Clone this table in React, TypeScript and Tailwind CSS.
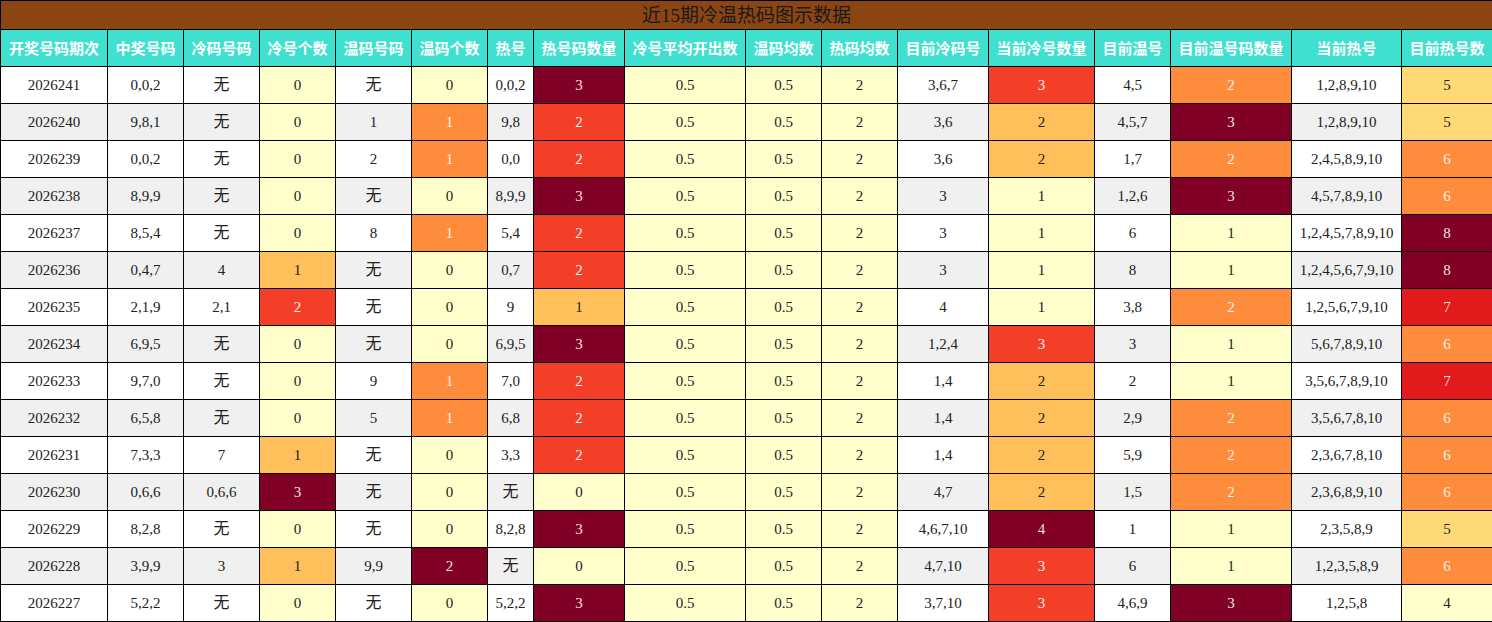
import React from "react";

// 近15期冷温热码 table
type Row = (string | number)[];

const headers = [
  "开奖号码期次", "中奖号码", "冷码号码", "冷号个数", "温码号码", "温码个数", "热号", "热号码数量",
  "冷号平均开出数", "温码均数", "热码均数", "目前冷码号", "当前冷号数量", "目前温号", "目前温号码数量", "当前热号", "目前热号数",
];

const colWidths = [
  "w-[107px]", "w-[76px]", "w-[76px]", "w-[76px]", "w-[76px]", "w-[76px]", "w-[46px]", "w-[91px]",
  "w-[121px]", "w-[76px]", "w-[76px]", "w-[91px]", "w-[106px]", "w-[76px]", "w-[121px]", "w-[110px]", "w-[91px]",
];

const rows: Row[] = [
  ["2026241", "0,0,2", "无", 0, "无", 0, "0,0,2", 3, "3,6,7", 3, "4,5", 2, "1,2,8,9,10", 5],
  ["2026240", "9,8,1", "无", 0, "1", 1, "9,8", 2, "3,6", 2, "4,5,7", 3, "1,2,8,9,10", 5],
  ["2026239", "0,0,2", "无", 0, "2", 1, "0,0", 2, "3,6", 2, "1,7", 2, "2,4,5,8,9,10", 6],
  ["2026238", "8,9,9", "无", 0, "无", 0, "8,9,9", 3, "3", 1, "1,2,6", 3, "4,5,7,8,9,10", 6],
  ["2026237", "8,5,4", "无", 0, "8", 1, "5,4", 2, "3", 1, "6", 1, "1,2,4,5,7,8,9,10", 8],
  ["2026236", "0,4,7", "4", 1, "无", 0, "0,7", 2, "3", 1, "8", 1, "1,2,4,5,6,7,9,10", 8],
  ["2026235", "2,1,9", "2,1", 2, "无", 0, "9", 1, "4", 1, "3,8", 2, "1,2,5,6,7,9,10", 7],
  ["2026234", "6,9,5", "无", 0, "无", 0, "6,9,5", 3, "1,2,4", 3, "3", 1, "5,6,7,8,9,10", 6],
  ["2026233", "9,7,0", "无", 0, "9", 1, "7,0", 2, "1,4", 2, "2", 1, "3,5,6,7,8,9,10", 7],
  ["2026232", "6,5,8", "无", 0, "5", 1, "6,8", 2, "1,4", 2, "2,9", 2, "3,5,6,7,8,10", 6],
  ["2026231", "7,3,3", "7", 1, "无", 0, "3,3", 2, "1,4", 2, "5,9", 2, "2,3,6,7,8,10", 6],
  ["2026230", "0,6,6", "0,6,6", 3, "无", 0, "无", 0, "4,7", 2, "1,5", 2, "2,3,6,8,9,10", 6],
  ["2026229", "8,2,8", "无", 0, "无", 0, "8,2,8", 3, "4,6,7,10", 4, "1", 1, "2,3,5,8,9", 5],
  ["2026228", "3,9,9", "3", 1, "9,9", 2, "无", 0, "4,7,10", 3, "6", 1, "1,2,3,5,8,9", 6],
  ["2026227", "5,2,2", "无", 0, "无", 0, "5,2,2", 3, "3,7,10", 3, "4,6,9", 3, "1,2,5,8", 4],
];

const light = "bg-[#ffffcc] text-[#222]";
const amber = "bg-[#ffbf5b] text-[#222]";
const orange = "bg-[#fd8d3c] text-[#f8f0e8]";
const red = "bg-[#f33f28] text-[#f4f4f4]";
const crimson = "bg-[#e31a1c] text-[#f4dede]";
const wine = "bg-[#800026] text-[#f0e0e4]";

const coldScale: Record<number, string> = { 0: light, 1: amber, 2: red, 3: wine, 4: wine };
const warmScale: Record<number, string> = { 0: light, 1: orange, 2: wine, 3: wine };
const curColdScale: Record<number, string> = { 1: light, 2: amber, 3: red, 4: wine };
const curWarmScale: Record<number, string> = { 1: light, 2: orange, 3: wine };
const hotScale: Record<number, string> = { 4: light, 5: "bg-[#fed976] text-[#222]", 6: orange, 7: crimson, 8: wine };

function Cell({ v, cls }: { v: string | number; cls: string }) {
  const isCjk = v === "无";
  return (
    <td className={`border border-black text-center p-0 h-[37px] ${isCjk ? "text-[16px]" : "text-[15px]"} ${cls}`}>
      {v}
    </td>
  );
}

export default function App() {
  return (
    <div className="w-[1492px] bg-white font-['Liberation_Serif','Noto_Sans_CJK_SC',serif]">
      <table className="table-fixed border-collapse w-[1492px]">
        <colgroup>
          {colWidths.map((w, i) => (
            <col key={i} className={w} />
          ))}
        </colgroup>
        <thead>
          <tr>
            <th colSpan={17} className="border border-black bg-[#8b4513] text-[#1a1a1a] text-[19px] font-normal h-[29px] p-0 leading-none">
              近15期冷温热码图示数据
            </th>
          </tr>
          <tr>
            {headers.map((h) => (
              <th
                key={h}
                className="border border-black bg-[#40e0d0] text-white text-[15px] font-bold h-[37px] p-0 whitespace-nowrap font-['Noto_Sans_CJK_SC',sans-serif]"
              >
                {h}
              </th>
            ))}
          </tr>
        </thead>
        <tbody>
          {rows.map((r, i) => {
            const plain = i % 2 === 1 ? "bg-[#f0f0f0] text-[#222]" : "bg-white text-[#222]";
            const [issue, win, coldNums, coldCnt, warmNums, warmCnt, hotNums, hotCnt, curCold, curColdCnt, curWarm, curWarmCnt, curHot, curHotCnt] = r;
            return (
              <tr key={issue as string}>
                <Cell v={issue} cls={plain} />
                <Cell v={win} cls={plain} />
                <Cell v={coldNums} cls={plain} />
                <Cell v={coldCnt} cls={coldScale[coldCnt as number]} />
                <Cell v={warmNums} cls={plain} />
                <Cell v={warmCnt} cls={warmScale[warmCnt as number]} />
                <Cell v={hotNums} cls={plain} />
                <Cell v={hotCnt} cls={coldScale[hotCnt as number]} />
                <Cell v="0.5" cls={light} />
                <Cell v="0.5" cls={light} />
                <Cell v="2" cls={light} />
                <Cell v={curCold} cls={plain} />
                <Cell v={curColdCnt} cls={curColdScale[curColdCnt as number]} />
                <Cell v={curWarm} cls={plain} />
                <Cell v={curWarmCnt} cls={curWarmScale[curWarmCnt as number]} />
                <Cell v={curHot} cls={plain} />
                <Cell v={curHotCnt} cls={hotScale[curHotCnt as number]} />
              </tr>
            );
          })}
        </tbody>
      </table>
    </div>
  );
}
